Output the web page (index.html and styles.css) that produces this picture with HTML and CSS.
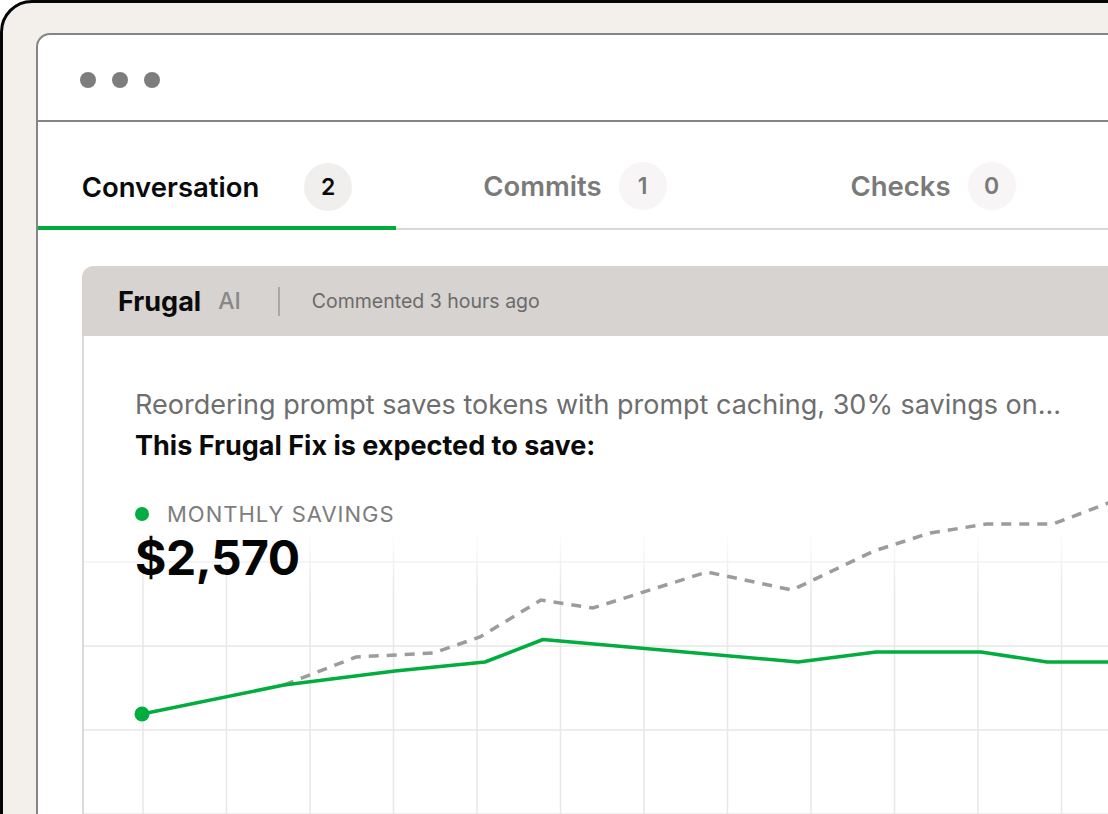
FILE: index.html
```html
<!DOCTYPE html>
<html lang="en">
<head>
<meta charset="utf-8">
<title>Frugal Fix</title>
<link rel="stylesheet" href="styles.css">
</head>
<body>
<div class="device">
  <div class="window">
    <div class="titlebar">
      <span class="dot"></span><span class="dot"></span><span class="dot"></span>
    </div>
    <nav class="tabs">
      <div class="tab tab-active">
        <span class="tab-label">Conversation</span>
        <span class="badge badge-active">2</span>
      </div>
      <div class="tab">
        <span class="tab-label">Commits</span>
        <span class="badge">1</span>
      </div>
      <div class="tab">
        <span class="tab-label">Checks</span>
        <span class="badge">0</span>
      </div>
    </nav>
    <section class="card">
      <header class="card-header">
        <span class="author">Frugal</span>
        <span class="author-tag">AI</span>
        <span class="divider"></span>
        <span class="meta">Commented 3 hours ago</span>
      </header>
      <div class="card-body">
        <div class="summary">
          <p class="summary-text">Reordering prompt saves tokens with prompt caching, 30% savings on...</p>
          <p class="summary-strong">This Frugal Fix is expected to save:</p>
        </div>
        <div class="chart">
          <svg class="chart-svg" width="1030" height="340" viewBox="0 0 1030 340">
            <defs>
              <linearGradient id="fade" x1="0" y1="0" x2="0" y2="340" gradientUnits="userSpaceOnUse">
                <stop offset="0.15" stop-color="#fff" stop-opacity="0"/>
                <stop offset="0.32" stop-color="#fff" stop-opacity="1"/>
              </linearGradient>
              <mask id="gridmask" maskUnits="userSpaceOnUse" x="0" y="0" width="1030" height="340">
                <rect x="0" y="0" width="1030" height="340" fill="url(#fade)"/>
              </mask>
            </defs>
            <g class="grid" mask="url(#gridmask)">
              <path d="M59 0V340M142.5 0V340M226 0V340M309.5 0V340M393 0V340M476.5 0V340M560 0V340M643.5 0V340M727 0V340M810.5 0V340M894 0V340M977.5 0V340"/>
              <path d="M0 82H1030M0 166H1030M0 250H1030M0 334H1030"/>
            </g>
            <polyline class="line-forecast" points="200,205 272,177 349,173 396,157 457,120 509,128 623,92 708,110 790,71 846,53 903,44 969,44 1019,25 1032,20"/>
            <polyline class="line-actual" points="58,234 200,205 311,191 401,182 459,159.5 714,182 792,172 897,172 963,182 1032,182"/>
            <circle class="line-dot" cx="58" cy="234" r="7.5"/>
          </svg>
          <div class="legend">
            <div class="legend-row">
              <span class="legend-dot"></span>
              <span class="legend-label">Monthly savings</span>
            </div>
            <div class="amount">$2,570</div>
          </div>
        </div>
      </div>
    </section>
  </div>
</div>
</body>
</html>
```

FILE: styles.css
```css
* { box-sizing: border-box; }

html, body {
  margin: 0;
  padding: 0;
  width: 1108px;
  height: 814px;
  overflow: hidden;
  background: #ffffff;
  font-family: "Inter", "Liberation Sans", sans-serif;
}

.device {
  width: 1220px;
  height: 900px;
  border: 3px solid #050505;
  border-radius: 32px;
  background: #f3f0ec;
  padding: 30px 0 0 33px;
}

.window {
  width: 1120px;
  height: 900px;
  border: 2px solid #858585;
  border-radius: 14px;
  background: #ffffff;
  overflow: hidden;
}

.titlebar {
  height: 87px;
  padding: 5px 0 0 42px;
  display: flex;
  align-items: center;
  gap: 16px;
  border-bottom: 2px solid #858585;
}

.dot {
  width: 16px;
  height: 16px;
  border-radius: 50%;
  background: #7d7d7d;
}

.tabs {
  display: flex;
  border-bottom: 2px solid #dad7d4;
}

.tab {
  width: 358px;
  height: 106px;
  padding-top: 22px;
  display: flex;
  align-items: center;
  justify-content: center;
  gap: 17px;
  color: #7a7a7a;
}

.tab-active {
  height: 108px;
  color: #0a0a0a;
  gap: 45px;
  border-bottom: 4px solid #00ab3c;
  margin-bottom: -2px;
  padding-top: 26px;
}

.tab-label {
  font-size: 27.5px;
  font-weight: 600;
}

.badge {
  width: 48px;
  height: 48px;
  border-radius: 50%;
  background: #f8f5f7;
  display: flex;
  align-items: center;
  justify-content: center;
  font-size: 23px;
  font-weight: 600;
  color: #7a7a7a;
}

.badge-active {
  background: #f1efed;
  color: #0a0a0a;
}

.card {
  margin: 36px 0 0 44px;
  width: 1100px;
  border-left: 2px solid #dcd9d6;
  border-top-left-radius: 12px;
  background: #ffffff;
}

.card-header {
  height: 70px;
  margin-left: -2px;
  background: #d6d3d0;
  border-top-left-radius: 12px;
  display: flex;
  align-items: center;
  padding-left: 36px;
}

.author {
  font-size: 27px;
  font-weight: 700;
  color: #0a0a0a;
}

.author-tag {
  margin-left: 17px;
  font-size: 23px;
  font-weight: 500;
  color: #8a8886;
}

.divider {
  width: 2px;
  height: 29px;
  margin: 0 32px 0 37px;
  background: #aaa7a4;
}

.meta {
  font-size: 19.5px;
  color: #6b6b6b;
}

.card-body {
  padding-top: 48px;
}

.summary {
  padding-left: 51px;
}

.summary p {
  margin: 0;
  font-size: 27px;
  line-height: 41px;
}

.summary-text {
  color: #6e6e6e;
}

.summary-strong {
  color: #0a0a0a;
  font-weight: 700;
}

.chart {
  position: relative;
  margin-top: 14px;
  height: 340px;
}

.chart-svg {
  display: block;
}

.grid path {
  fill: none;
  stroke: #e9e7e7;
  stroke-width: 1.5;
}

.line-actual {
  fill: none;
  stroke: #00ad3e;
  stroke-width: 3.5;
  stroke-linejoin: round;
}

.line-forecast {
  fill: none;
  stroke: #9d9c9c;
  stroke-width: 3.5;
  stroke-dasharray: 10 8;
}

.line-dot {
  fill: #00ad3e;
}

.legend {
  position: absolute;
  left: 51px;
  top: 22px;
}

.legend-row {
  display: flex;
  align-items: center;
  gap: 18px;
  height: 24px;
}

.legend-dot {
  width: 14px;
  height: 14px;
  border-radius: 50%;
  background: #00ad3e;
}

.legend-label {
  font-size: 22px;
  text-transform: uppercase;
  letter-spacing: 1px;
  color: #7d7d7d;
}

.amount {
  margin-top: 8px;
  font-size: 48px;
  line-height: 1;
  font-weight: 700;
  color: #050505;
  letter-spacing: -0.5px;
}
```
